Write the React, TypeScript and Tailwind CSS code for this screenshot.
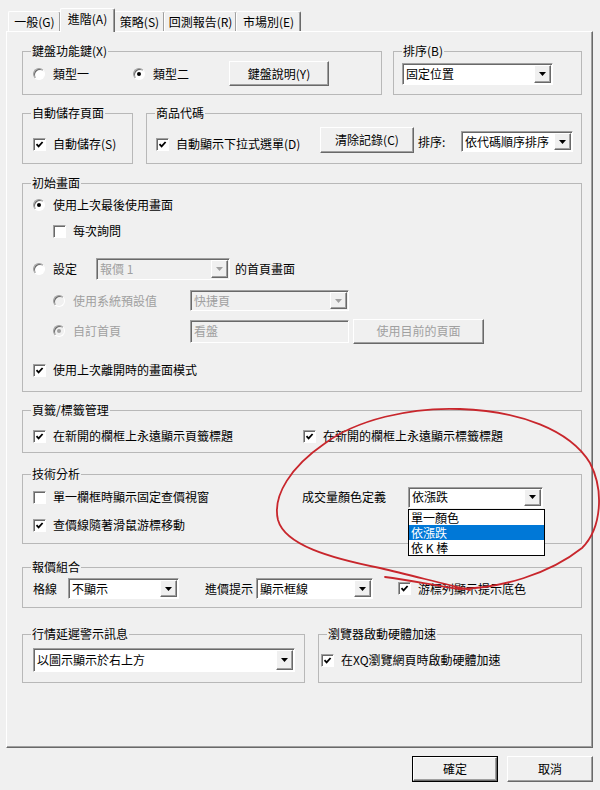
const raisedCls =
  "border border-t-white border-l-white border-r-[#696969] border-b-[#696969] shadow-[inset_-1px_-1px_0_#a0a0a0] bg-[#f0f0f0]";
const sunkenCls =
  "border border-t-[#a0a0a0] border-l-[#a0a0a0] border-r-white border-b-white shadow-[inset_1px_1px_0_#696969]";

const Radio = ({ checked = false, disabled = false }: { checked?: boolean; disabled?: boolean }) => (
  <span
    className={`w-[12px] h-[12px] shrink-0 rounded-full flex items-center justify-center ${sunkenCls} ${
      disabled ? "bg-[#f0f0f0]" : "bg-white"
    }`}
  >
    {checked && <span className={`w-[4px] h-[4px] rounded-full ${disabled ? "bg-[#a0a0a0]" : "bg-black"}`} />}
  </span>
);

const Checkbox = ({ checked = false }: { checked?: boolean }) => (
  <span className={`w-[13px] h-[13px] shrink-0 bg-white flex items-center justify-center ${sunkenCls}`}>
    {checked && (
      <svg width="9" height="9" viewBox="0 0 9 9">
        <path d="M1.5 4.2 L3.6 6.4 L7.6 2" fill="none" stroke="#000" strokeWidth="1.8" />
      </svg>
    )}
  </span>
);

const RadioLabel = ({
  label,
  checked,
  disabled,
  className = "",
}: {
  label: string;
  checked?: boolean;
  disabled?: boolean;
  className?: string;
}) => (
  <label className={`flex items-center gap-[8px] shrink-0 ${className}`}>
    <Radio checked={checked} disabled={disabled} />
    <span className={disabled ? "text-[#a0a0a0]" : ""}>{label}</span>
  </label>
);

const CheckLabel = ({ label, checked, className = "" }: { label: string; checked?: boolean; className?: string }) => (
  <label className={`flex items-center gap-[7px] shrink-0 ${className}`}>
    <Checkbox checked={checked} />
    <span>{label}</span>
  </label>
);

const Arrow = ({ disabled = false }: { disabled?: boolean }) => (
  <svg width="7" height="4" viewBox="0 0 7 4">
    <polygon points="0,0 7,0 3.5,4" fill={disabled ? "#a0a0a0" : "#000"} />
  </svg>
);

const Combo = ({ value, disabled = false, className = "" }: { value: string; disabled?: boolean; className?: string }) => (
  <div className={`flex shrink-0 ${sunkenCls} ${disabled ? "bg-[#f0f0f0]" : "bg-white"} ${className}`}>
    <span className={`flex-1 flex items-center pl-[3px] whitespace-nowrap ${disabled ? "text-[#a0a0a0]" : ""}`}>
      {value}
    </span>
    <span className={`w-[17px] my-[1px] mr-[1px] flex items-center justify-center ${raisedCls}`}>
      <Arrow disabled={disabled} />
    </span>
  </div>
);

const Button = ({ label, disabled = false, className = "" }: { label: string; disabled?: boolean; className?: string }) => (
  <button className={`flex items-center justify-center shrink-0 ${raisedCls} ${disabled ? "text-[#a0a0a0]" : ""} ${className}`}>
    {label}
  </button>
);

const Group = ({ title, className = "", children }: { title: string; className?: string; children?: React.ReactNode }) => (
  <fieldset className={`border border-[#b8b8b8] min-w-0 ${className}`}>
    <legend className="ml-[8px] px-[1px] leading-[14px]">{title}</legend>
    {children}
  </fieldset>
);

const App = () => {
  const tabs = [
    { label: "一般(G)", w: "w-[53px]" },
    { label: "進階(A)", w: "w-[55px]", active: true },
    { label: "策略(S)", w: "w-[51px]" },
    { label: "回測報告(R)", w: "w-[73px]" },
    { label: "市場別(E)", w: "w-[65px]" },
  ];

  const volumeOptions = ["單一顏色", "依漲跌", "依 K 棒"];

  return (
    <div className="relative w-[600px] h-[790px] overflow-hidden bg-[#f0f0f0] text-black text-[12px] leading-[14px] font-['Noto_Sans_CJK_TC','Noto_Sans',sans-serif]">
      {/* tab strip */}
      <div className="flex items-end h-[31px] pl-[8px]">
        {tabs.map((tab, i) =>
          tab.active ? (
            <div
              key={i}
              className={`${tab.w} -ml-px relative z-10 -mb-px h-[24px] pb-[3px] flex items-center justify-center bg-[#f0f0f0] border-t border-l border-r border-t-white border-l-white border-r-[#696969] shadow-[inset_-1px_0_0_#a0a0a0] rounded-t-[2px]`}
            >
              {tab.label}
            </div>
          ) : (
            <div
              key={i}
              className={`${tab.w} ${i > 0 ? "-ml-px" : ""} h-[20px] flex items-center justify-center border-t border-l border-r border-t-white border-l-white border-r-[#696969] shadow-[inset_-1px_0_0_#a0a0a0] rounded-t-[2px]`}
            >
              {tab.label}
            </div>
          )
        )}
      </div>

      {/* tab page */}
      <div className="ml-[6px] w-[587px] h-[717px] flex flex-col pl-[15px] pr-[10px] border border-t-white border-l-white border-r-[#696969] border-b-[#696969] shadow-[inset_-1px_-1px_0_#a0a0a0]">
        <div className="flex gap-[11px] mt-[12px] h-[51px]">
          <Group title="鍵盤功能鍵(X)" className="w-[360px] h-full">
            <div className="flex items-center pl-[10px] pt-[3px]">
              <RadioLabel label="類型一" className="w-[100px]" />
              <RadioLabel label="類型二" checked className="w-[96px]" />
              <Button label="鍵盤說明(Y)" className="w-[100px] h-[25px]" />
            </div>
          </Group>
          <Group title="排序(B)" className="w-[189px] h-full">
            <div className="pl-[8px] pt-[5px]">
              <Combo value="固定位置" className="w-[151px] h-[22px]" />
            </div>
          </Group>
        </div>

        <div className="flex gap-[13px] mt-[11px] h-[58px]">
          <Group title="自動儲存頁面" className="w-[111px] h-full">
            <div className="flex items-center pl-[10px] pt-[16px] h-[32px]">
              <CheckLabel label="自動儲存(S)" checked />
            </div>
          </Group>
          <Group title="商品代碼" className="w-[436px] h-full">
            <div className="flex pl-[9px] mt-[7px] h-[26px]">
              <CheckLabel label="自動顯示下拉式選單(D)" checked className="w-[164px] self-end mb-[2px]" />
              <Button label="清除記錄(C)" className="w-[94px] h-[26px]" />
              <span className="w-[43px] ml-[4px] self-end mb-[4px]">排序:</span>
              <Combo value="依代碼順序排序" className="w-[112px] h-[21px] self-end mb-[1px]" />
            </div>
          </Group>
        </div>

        <Group title="初始畫面" className="mt-[12px] h-[216px]">
          <div className="flex flex-col pl-[10px]">
            <div className="flex items-center mt-[7px] h-[16px]">
              <RadioLabel label="使用上次最後使用畫面" checked />
            </div>
            <div className="flex items-center mt-[10px] h-[16px] pl-[20px]">
              <CheckLabel label="每次詢問" />
            </div>
            <div className="flex items-center mt-[18px] h-[24px]">
              <RadioLabel label="設定" className="w-[63px]" />
              <Combo value="報價 1" disabled className="w-[134px] h-[22px]" />
              <span className="ml-[5px]">的首頁畫面</span>
            </div>
            <div className="flex items-center mt-[8px] h-[23px] pl-[20px]">
              <RadioLabel label="使用系統預設值" disabled className="w-[137px]" />
              <Combo value="快捷頁" disabled className="w-[159px] h-[21px]" />
            </div>
            <div className="flex items-center mt-[6px] h-[26px] pl-[20px]">
              <RadioLabel label="自訂首頁" checked disabled className="w-[137px]" />
              <div className={`w-[159px] h-[23px] flex items-center pl-[3px] bg-[#f0f0f0] text-[#a0a0a0] ${sunkenCls}`}>
                看盤
              </div>
              <Button label="使用目前的頁面" disabled className="ml-[4px] w-[131px] h-[25px]" />
            </div>
            <div className="flex items-center mt-[18px] h-[16px]">
              <CheckLabel label="使用上次離開時的畫面模式" checked />
            </div>
          </div>
        </Group>

        <Group title="頁籤/標籤管理" className="mt-[11px] h-[50px]">
          <div className="flex items-center pl-[10px] mt-[11px] h-[16px]">
            <CheckLabel label="在新開的欄框上永遠顯示頁籤標題" checked className="w-[270px]" />
            <CheckLabel label="在新開的欄框上永遠顯示標籤標題" checked />
          </div>
        </Group>

        <Group title="技術分析" className="mt-[14px] h-[77px]">
          <div className="flex flex-col pl-[10px]">
            <div className="flex items-center mt-[5px] h-[22px]">
              <CheckLabel label="單一欄框時顯示固定查價視窗" className="w-[269px]" />
              <span className="w-[106px]">成交量顏色定義</span>
              <div className="relative">
                <Combo value="依漲跌" className="w-[135px] h-[21px]" />
                <div className="absolute z-20 left-0 top-[22px] w-[137px] bg-white border border-black">
                  {volumeOptions.map((opt) => (
                    <div
                      key={opt}
                      className={`h-[15px] pl-[2px] text-[12px] leading-[15px] ${
                        opt === "依漲跌" ? "bg-[#0078d7] text-white" : ""
                      }`}
                    >
                      {opt}
                    </div>
                  ))}
                </div>
              </div>
            </div>
            <div className="flex items-center mt-[9px] h-[16px]">
              <CheckLabel label="查價線隨著滑鼠游標移動" checked />
            </div>
          </div>
        </Group>

        <Group title="報價組合" className="mt-[16px] h-[48px]">
          <div className="flex items-center pl-[10px] mt-[4px] h-[21px]">
            <span className="w-[35px]">格線</span>
            <Combo value="不顯示" className="w-[111px] h-[21px]" />
            <span className="ml-[26px] w-[51px]">進價提示</span>
            <Combo value="顯示框線" className="w-[117px] h-[21px]" />
            <CheckLabel label="游標列顯示提示底色" checked className="ml-[25px]" />
          </div>
        </Group>

        <div className="flex gap-[13px] mt-[19px] h-[56px]">
          <Group title="行情延遲警示訊息" className="w-[283px] h-full">
            <div className="pl-[10px] mt-[7px]">
              <Combo value="以圖示顯示於右上方" className="w-[262px] h-[24px]" />
            </div>
          </Group>
          <Group title="瀏覽器啟動硬體加速" className="w-[264px] h-full">
            <div className="flex items-center pl-[2px] mt-[11px] h-[16px]">
              <CheckLabel label="在XQ瀏覽網頁時啟動硬體加速" checked />
            </div>
          </Group>
        </div>
      </div>

      {/* dialog buttons */}
      <div className="flex justify-end gap-[9px] pr-[7px] pt-[8px]">
        <div className="w-[86px] h-[26px] border border-black flex">
          <Button label="確定" className="flex-1 h-full" />
        </div>
        <Button label="取消" className="w-[86px] h-[26px]" />
      </div>

      {/* red hand-drawn annotation */}
      <svg className="absolute inset-0 z-30 pointer-events-none" width="600" height="790" viewBox="0 0 600 790">
        <path
          d="M 385 577 C 410 580, 432 585, 460 589 C 500 588, 548 575, 582 548 C 602 528, 604 490, 590 463 C 570 430, 520 411, 460 409 C 410 407, 356 420, 324 444 C 292 466, 272 495, 278 520 C 285 545, 330 558, 380 568 C 410 575, 440 583, 470 590"
          fill="none"
          stroke="#c8262c"
          strokeWidth="1.8"
          strokeLinecap="round"
        />
      </svg>
    </div>
  );
};

export default App;
